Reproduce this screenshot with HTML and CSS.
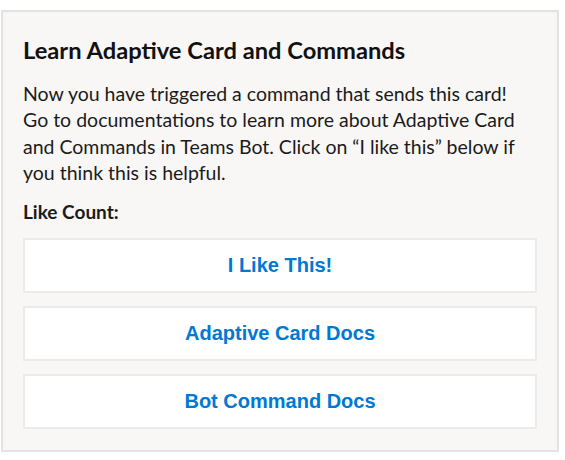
FILE: index.html
```html
<!DOCTYPE html>
<html>
<head>
<meta charset="utf-8">
<link rel="stylesheet" href="styles.css">
</head>
<body>
<div class="card">
  <div class="title">Learn Adaptive Card and Commands</div>
  <p class="body">Now you have triggered a command that sends this card!<br>Go to documentations to learn more about Adaptive Card<br>and Commands in Teams Bot. Click on “I like this” below if<br>you think this is helpful.</p>
  <div class="count">Like Count:</div>
  <div class="actions">
    <button class="action">I Like This!</button>
    <button class="action">Adaptive Card Docs</button>
    <button class="action">Bot Command Docs</button>
  </div>
</div>
</body>
</html>
```
FILE: styles.css
```css
html, body { margin: 0; padding: 0; background: #ffffff; }
body { padding: 10px 0 0 1px; }
.card {
  width: 558px;
  box-sizing: border-box;
  border: 2px solid #e3e3e3;
  background: #f8f7f6;
  padding: 23px 20px 21px 20px;
  font-family: Lato, "Open Sans", sans-serif;
  color: #1b1b1b;
}
.title {
  font-size: 23.7px;
  font-weight: 700;
  line-height: 30px;
  color: #111111;
}
.body {
  margin: 16px 0 0 0;
  font-size: 19.5px;
  line-height: 26.33px;
  white-space: nowrap;
}
.count {
  margin-top: 14px;
  font-size: 19px;
  font-weight: 700;
  line-height: 24px;
}
.actions {
  margin-top: 14px;
  display: flex;
  flex-direction: column;
  gap: 13px;
}
.action {
  height: 55px;
  border: 2px solid #ebebeb;
  background: #ffffff;
  font-family: "Liberation Sans", Arial, sans-serif;
  font-weight: 700;
  font-size: 20px;
  color: #0078d4;
  padding: 0;
  margin: 0;
}
```
